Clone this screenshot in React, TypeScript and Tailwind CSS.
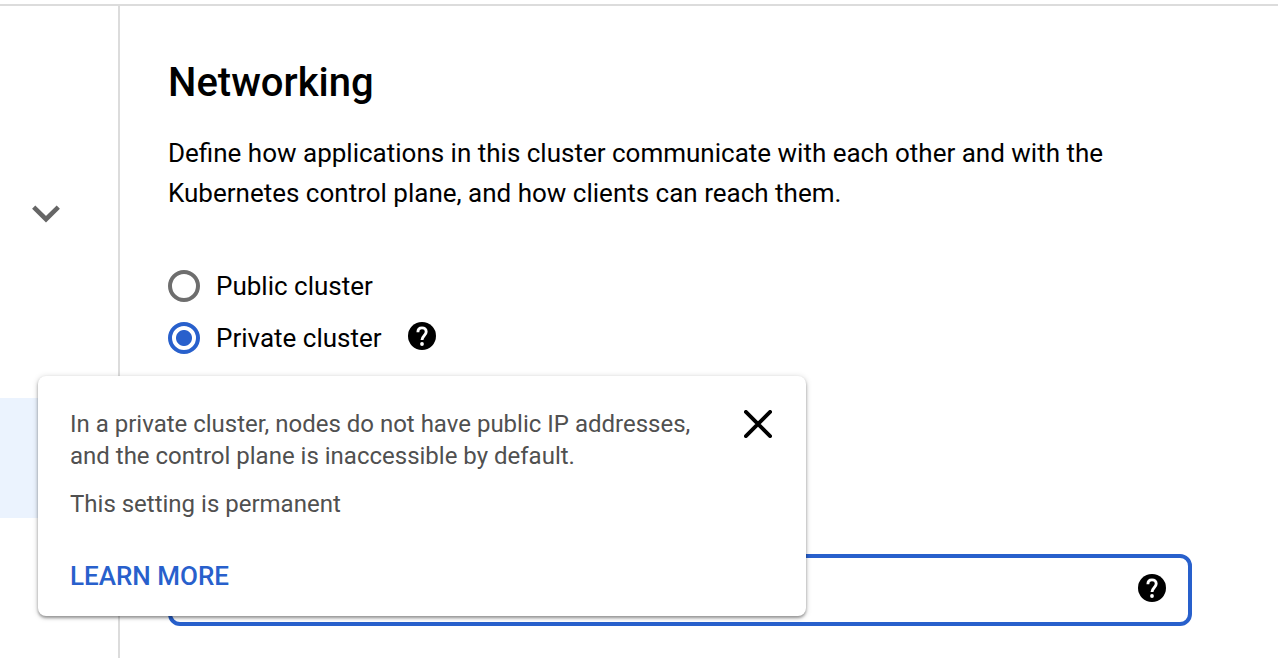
import { useState } from "react";

function HelpIcon() {
  return (
    <svg viewBox="0 0 28 28" className="block size-7" aria-hidden="true">
      <circle cx="14" cy="14" r="14" fill="#000" />
      <path
        d="M9.900 10.200C9.900 7.500 11.600 5.900 14 5.900s4.200 1.500 4.200 3.900c0 3.500-4.200 3.900-4.200 8.300"
        fill="none"
        stroke="#fff"
        strokeWidth="2.900"
      />
      <circle cx="14" cy="22" r="1.900" fill="#fff" />
    </svg>
  );
}

const radioClass =
  "m-0 size-8 shrink-0 appearance-none rounded-full border-4 border-[#6e6e6e] bg-white checked:border-[#2860cc] checked:bg-[radial-gradient(circle,#2860cc_7.5px,#fff_8.5px)]";

export default function App() {
  const [cluster, setCluster] = useState("private");
  const [open, setOpen] = useState(true);

  return (
    <div className="flex min-h-screen flex-col bg-white pt-1 font-['Roboto','Liberation_Sans',sans-serif] text-black">
      <div className="flex grow border-t-2 border-[#dcdcdc]">
        <nav className="w-30 shrink-0 border-r-2 border-[#dcdcdc] pt-46" aria-label="Cluster sections">
          <button type="button" aria-label="Expand section" className="ml-6 flex h-12 w-11 items-center justify-center">
            <svg viewBox="0 0 28 18" className="block h-4.5 w-7" aria-hidden="true">
              <path d="M1.700 2.200 14 14.200 26.300 2.200" fill="none" stroke="#666" strokeWidth="4.600" />
            </svg>
          </button>
          <a href="#networking" aria-label="Networking" className="mt-40 block h-30 bg-[#ebf3fe]" />
        </nav>

        <main className="min-w-0 grow pt-[49px] pr-20 pl-12">
          <div className="max-w-[1024px]">
            <h1 className="text-[40px] leading-14 font-medium">Networking</h1>
            <p className="mt-[22px] text-[26px] leading-10">
              Define how applications in this cluster communicate with each other and with the Kubernetes control
              plane, and how clients can reach them.
            </p>

            <div role="radiogroup" aria-label="Cluster access" className="relative mt-[47px]">
              <label className="flex h-13 w-fit items-center gap-4 text-[26px] leading-8">
                <input
                  type="radio"
                  name="cluster"
                  className={radioClass}
                  checked={cluster === "public"}
                  onChange={() => setCluster("public")}
                />
                Public cluster
              </label>
              <div className="flex h-13 items-center gap-[26px]">
                <label className="flex items-center gap-4 text-[26px] leading-8">
                  <input
                    type="radio"
                    name="cluster"
                    className={radioClass}
                    checked={cluster === "private"}
                    onChange={() => setCluster("private")}
                  />
                  Private cluster
                </label>
                <button
                  type="button"
                  aria-label="About private clusters"
                  className="pb-1"
                  onClick={() => setOpen(!open)}
                >
                  <HelpIcon />
                </button>
              </div>

              {open && (
                <div
                  role="dialog"
                  aria-label="Private cluster help"
                  className="absolute top-29 -left-[130px] z-10 w-192 rounded-lg bg-white px-8 pt-8 pb-6 shadow-[0_2px_3px_rgba(0,0,0,0.35),0_1px_6px_rgba(0,0,0,0.18)]"
                >
                  <div className="flex items-start justify-between">
                    <div className="text-2xl leading-8 text-[#505050]">
                      <p>
                        In a private cluster, nodes do not have public IP addresses,
                        <br />
                        and the control plane is inaccessible by default.
                      </p>
                      <p className="mt-4">This setting is permanent</p>
                    </div>
                    <button type="button" aria-label="Close" onClick={() => setOpen(false)} className="p-0.5">
                      <svg viewBox="0 0 28 28" className="block size-7" aria-hidden="true">
                        <path
                          d="M1.900 1.900 26.100 26.100M26.100 1.900 1.900 26.100"
                          stroke="#000"
                          strokeWidth="3.800"
                          strokeLinecap="round"
                        />
                      </svg>
                    </button>
                  </div>
                  <a
                    href="#learn-more"
                    className="mt-10 block w-fit text-[26px] leading-8 font-medium text-[#2860cc]"
                  >
                    LEARN MORE
                  </a>
                </div>
              )}
            </div>

            <div className="mt-[190px] flex h-18 items-center rounded-xl border-4 border-[#2860cc] pr-[22px]">
              <input
                type="text"
                aria-label="Network"
                className="h-full min-w-0 grow bg-transparent px-4 text-[26px] outline-none"
              />
              <button type="button" aria-label="About this field" className="pb-1">
                <HelpIcon />
              </button>
            </div>
          </div>
        </main>
      </div>
    </div>
  );
}
